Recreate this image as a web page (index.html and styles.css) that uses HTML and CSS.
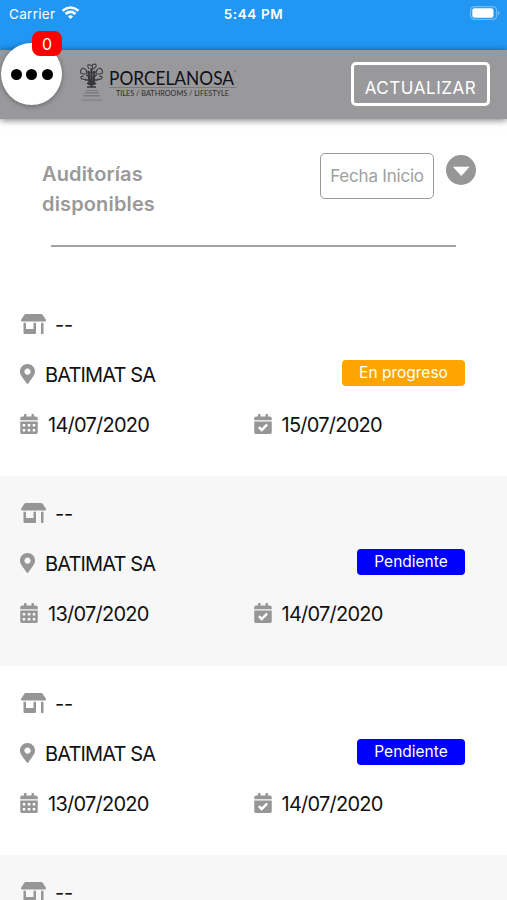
FILE: index.html
```html
<!DOCTYPE html>
<html lang="es">
<head>
<meta charset="utf-8">
<title>Auditorías disponibles</title>
<link rel="stylesheet" href="styles.css">
</head>
<body>
<svg class="sprite" aria-hidden="true">
  <symbol id="store" viewBox="0 0 640 512"><path d="M320 384H128V224H64v256c0 17.7 14.3 32 32 32h256c17.7 0 32-14.3 32-32V224h-64v160zm314.6-241.8l-85.3-128c-6-8.9-16-14.2-26.700-14.2H117.4c-10.700 0-20.700 5.300-26.600 14.200l-85.300 128c-14.200 21.300 1 49.800 26.600 49.800H608c25.500 0 40.700-28.500 26.600-49.800zM512 496c0 8.800 7.200 16 16 16h32c8.800 0 16-7.200 16-16V224h-64v272z"/></symbol>
  <symbol id="pin" viewBox="0 0 384 512"><path d="M172.3 501.7C27 291 0 269.4 0 192 0 86 86 0 192 0s192 86 192 192c0 77.4-27 99-172.3 309.7-9.500 13.700-29.900 13.700-39.400 0zM192 272c44.200 0 80-35.800 80-80s-35.800-80-80-80-80 35.800-80 80 35.800 80 80 80z"/></symbol>
  <symbol id="calendar" viewBox="0 0 448 512"><path fill-rule="evenodd" d="M0 464c0 26.500 21.500 48 48 48h352c26.500 0 48-21.500 48-48V192H0zM64 256h64v64H64zm128 0h64v64h-64zm128 0h64v64h-64zM64 384h64v64H64zm128 0h64v64h-64zm128 0h64v64h-64zM400 64h-48V16c0-8.800-7.200-16-16-16h-32c-8.800 0-16 7.200-16 16v48H160V16c0-8.800-7.200-16-16-16h-32c-8.800 0-16 7.200-16 16v48H48C21.500 64 0 85.500 0 112v48h448v-48c0-26.500-21.500-48-48-48z"/></symbol>
  <symbol id="check" viewBox="0 0 448 512"><path fill-rule="evenodd" d="M0 464c0 26.500 21.500 48 48 48h352c26.500 0 48-21.500 48-48V192H0zM345 299L198 445q-9 8-17 0L103 366q-8-8 0-17l28-28q9-8 17 0l42 43 110-110q9-8 17 0l28 28q8 9 0 17zM400 64h-48V16c0-8.800-7.200-16-16-16h-32c-8.800 0-16 7.200-16 16v48H160V16c0-8.800-7.200-16-16-16h-32c-8.800 0-16 7.200-16 16v48H48C21.500 64 0 85.500 0 112v48h448v-48c0-26.500-21.500-48-48-48z"/></symbol>
</svg>
<div class="status">
  <div class="carrier">Carrier
    <svg class="wifi" viewBox="0 0 18 14" fill="none" stroke="#fff" stroke-width="2.500"><path d="M1 4.800Q9-1.800 17 4.800M4 8Q9 3.800 14 8"/><path d="M6.300 10.300Q9 8.300 11.700 10.300L9 13z" fill="#fff" stroke="none"/></svg>
  </div>
  <div class="time">5:44 PM</div>
  <svg class="battery" viewBox="0 0 30 14"><rect x=".6" y=".6" width="26" height="12.800" rx="3.800" fill="none" stroke="#73bbf7" stroke-width="1.200"/><rect x="2.300" y="2.300" width="21.200" height="9.400" rx="2.200" fill="#fff"/><path d="M28 4.700q3 2.300 0 4.600z" fill="#86c5f8"/></svg>
</div>
<header class="bar">
  <svg class="logo" viewBox="0 0 160 40">
    <g fill="none" stroke="#38383b" stroke-width="1.100">
      <path d="M9 7q-4-5-6-1t3 4 2-3M18 7q4-5 6-1t-3 4-2-3M11 5q-3-5 1-4t2 3M15 5q4-2 3-4t-4 0M6 12q-4 0-3 2t5 1M21 12q4 0 3 2t-5 1M10 7q3 4 7 0M8 11q5 4 11 0"/>
      <path d="M13.500 4v19M10.500 7l1 14M16.500 7l-1 14" stroke-width="2.200"/>
      <path d="M7 16h13M9 19q5 3 9 0M9 23h9" stroke-width="1.600"/>
    </g>
    <path d="M8 26h12v1H8zM7 28h14v1.500H7zM5 31h17v1.500H5zM4 35.500h20v1H4z" fill="#7c7b7e"/>
    <text class="brand" x="31" y="20.500" textLength="125" lengthAdjust="spacingAndGlyphs">PORCELANOSA</text>
    <circle cx="157.200" cy="7" r=".7" fill="#444"/>
    <path d="M31 23.500h128" stroke="#7c7b7e" stroke-width="1"/>
    <text class="tagline" x="38" y="32.300" textLength="113" lengthAdjust="spacingAndGlyphs">TILES / BATHROOMS / LIFESTYLE</text>
  </svg>
  <button class="refresh">ACTUALIZAR</button>
  <div class="bubble"><i></i><i></i><i></i><span class="count">0</span></div>
</header>
<section class="filter">
  <h1>Auditorías disponibles</h1>
  <div class="select">Fecha Inicio</div>
  <svg class="drop" viewBox="0 0 30 30"><circle cx="15" cy="15" r="15" fill="#969696"/><path d="M7.500 12h15.600L15.300 20.700z" fill="#fff" stroke="#fff" stroke-width=".6" stroke-linejoin="round"/></svg>
</section>
<hr>
<main>
  <article>
    <div class="row"><svg class="store"><use href="#store"/></svg><span class="dash">--</span></div>
    <div class="row"><svg class="pin"><use href="#pin"/></svg><span class="name">BATIMAT SA</span><span class="tag progress">En progreso</span></div>
    <div class="row dates"><div><svg class="cal"><use href="#calendar"/></svg><span>14/07/2020</span></div><div><svg class="cal"><use href="#check"/></svg><span>15/07/2020</span></div></div>
  </article>
  <article>
    <div class="row"><svg class="store"><use href="#store"/></svg><span class="dash">--</span></div>
    <div class="row"><svg class="pin"><use href="#pin"/></svg><span class="name">BATIMAT SA</span><span class="tag">Pendiente</span></div>
    <div class="row dates"><div><svg class="cal"><use href="#calendar"/></svg><span>13/07/2020</span></div><div><svg class="cal"><use href="#check"/></svg><span>14/07/2020</span></div></div>
  </article>
  <article>
    <div class="row"><svg class="store"><use href="#store"/></svg><span class="dash">--</span></div>
    <div class="row"><svg class="pin"><use href="#pin"/></svg><span class="name">BATIMAT SA</span><span class="tag">Pendiente</span></div>
    <div class="row dates"><div><svg class="cal"><use href="#calendar"/></svg><span>13/07/2020</span></div><div><svg class="cal"><use href="#check"/></svg><span>14/07/2020</span></div></div>
  </article>
  <article class="last">
    <div class="row"><svg class="store"><use href="#store"/></svg><span class="dash">--</span></div>
  </article>
</main>
</body>
</html>
```
FILE: styles.css
```css
* { box-sizing: border-box; }
body { margin: 0; height: 900px; overflow: hidden; display: flex; flex-direction: column; background: #fff; font-family: Inter, "Liberation Sans", sans-serif; color: #111; }
body > * { flex-shrink: 0; }
svg { flex: none; display: block; }
.sprite { display: none; }
.status { height: 50px; background: #2196f3; color: #fff; display: grid; grid-template-columns: 1fr auto 1fr; align-items: start; padding: 6px 7px 0 9px; font-size: 13px; line-height: 16px; }
.carrier { display: flex; gap: 6px; font-size: 13.500px; letter-spacing: .3px; }
.wifi { width: 19px; height: 14px; }
.time { font-weight: 600; font-size: 13.500px; letter-spacing: .6px; margin-right: 2px; }
.battery { width: 30px; height: 14px; justify-self: end; }
.bar { position: relative; height: 69px; background: #99989b; box-shadow: 0 1px 7px rgba(0,0,0,.55); display: flex; justify-content: space-between; align-items: flex-start; padding: 12px 17px 0 78px; }
.logo { width: 160px; height: 40px; margin-top: 2px; overflow: visible; }
.brand { font: 20px Lato, sans-serif; fill: #111113; }
.tagline { font: 7.500px Lato, sans-serif; fill: #2d2d2f; }
.refresh { width: 139px; height: 44px; border: 3px solid #fff; border-radius: 5px; background: none; color: #fff; font: 17px/20px Inter, sans-serif; letter-spacing: .55px; padding: 7px 0 0; white-space: nowrap; }
.bubble { position: absolute; left: 1px; top: -7px; width: 61px; height: 62px; border-radius: 50%; background: #fff; box-shadow: 0 1px 5px rgba(0,0,0,.35); display: flex; align-items: center; justify-content: center; gap: 4.500px; }
.bubble i { width: 11px; height: 11px; border-radius: 50%; background: #000; }
.count { position: absolute; left: 31px; top: -12px; width: 30px; height: 25px; border-radius: 8px; background: #f00; color: #fff; font-size: 16px; line-height: 26px; text-align: center; }
.filter { height: 126px; padding: 34px 31px 0 42px; display: flex; align-items: flex-start; }
h1 { margin: 6px auto 0 0; width: 150px; font-size: 20px; line-height: 30px; font-weight: 600; letter-spacing: .15px; color: #999; }
.select { width: 114px; height: 46px; border: 1.500px solid #999; border-radius: 5px; color: #a0a0a0; font-size: 17px; letter-spacing: -.2px; line-height: 44px; text-align: center; white-space: nowrap; }
.drop { width: 30px; height: 30px; margin: 2px 0 0 12px; }
hr { width: 405px; height: 1.500px; border: 0; background: #a3a3a3; margin: 0 0 0 51px; }
article { height: 189.300px; padding: 25px 20px 0; }
main { margin-top: 40.500px; }
article:nth-child(even) { background: #f7f7f7; }
article.last { height: 46px; }
.last .row { height: 21px; }
.row { height: 50px; display: flex; align-items: flex-start; font-size: 20px; line-height: 26px; white-space: nowrap; }
.row svg { fill: #969696; }
.store { width: 25px; height: 20px; margin: 2px 0 0 1px; }
.dash { margin-left: 9px; letter-spacing: -.3px; }
.pin { width: 15px; height: 20px; margin: 2px 0 0; }
.name { margin-left: 10px; letter-spacing: -.85px; }
.tag { margin: -2px 22px 0 auto; width: 108px; height: 26px; border-radius: 4px; background: #00f; color: #fff; font-size: 15.500px; line-height: 26px; text-align: center; }
.progress { width: 123px; background: #ffa500; }
.dates > div { display: flex; width: 233.500px; gap: 10px; }
.dates span { letter-spacing: -.75px; }
.cal { width: 18px; height: 20px; margin-top: 2px; }
```
